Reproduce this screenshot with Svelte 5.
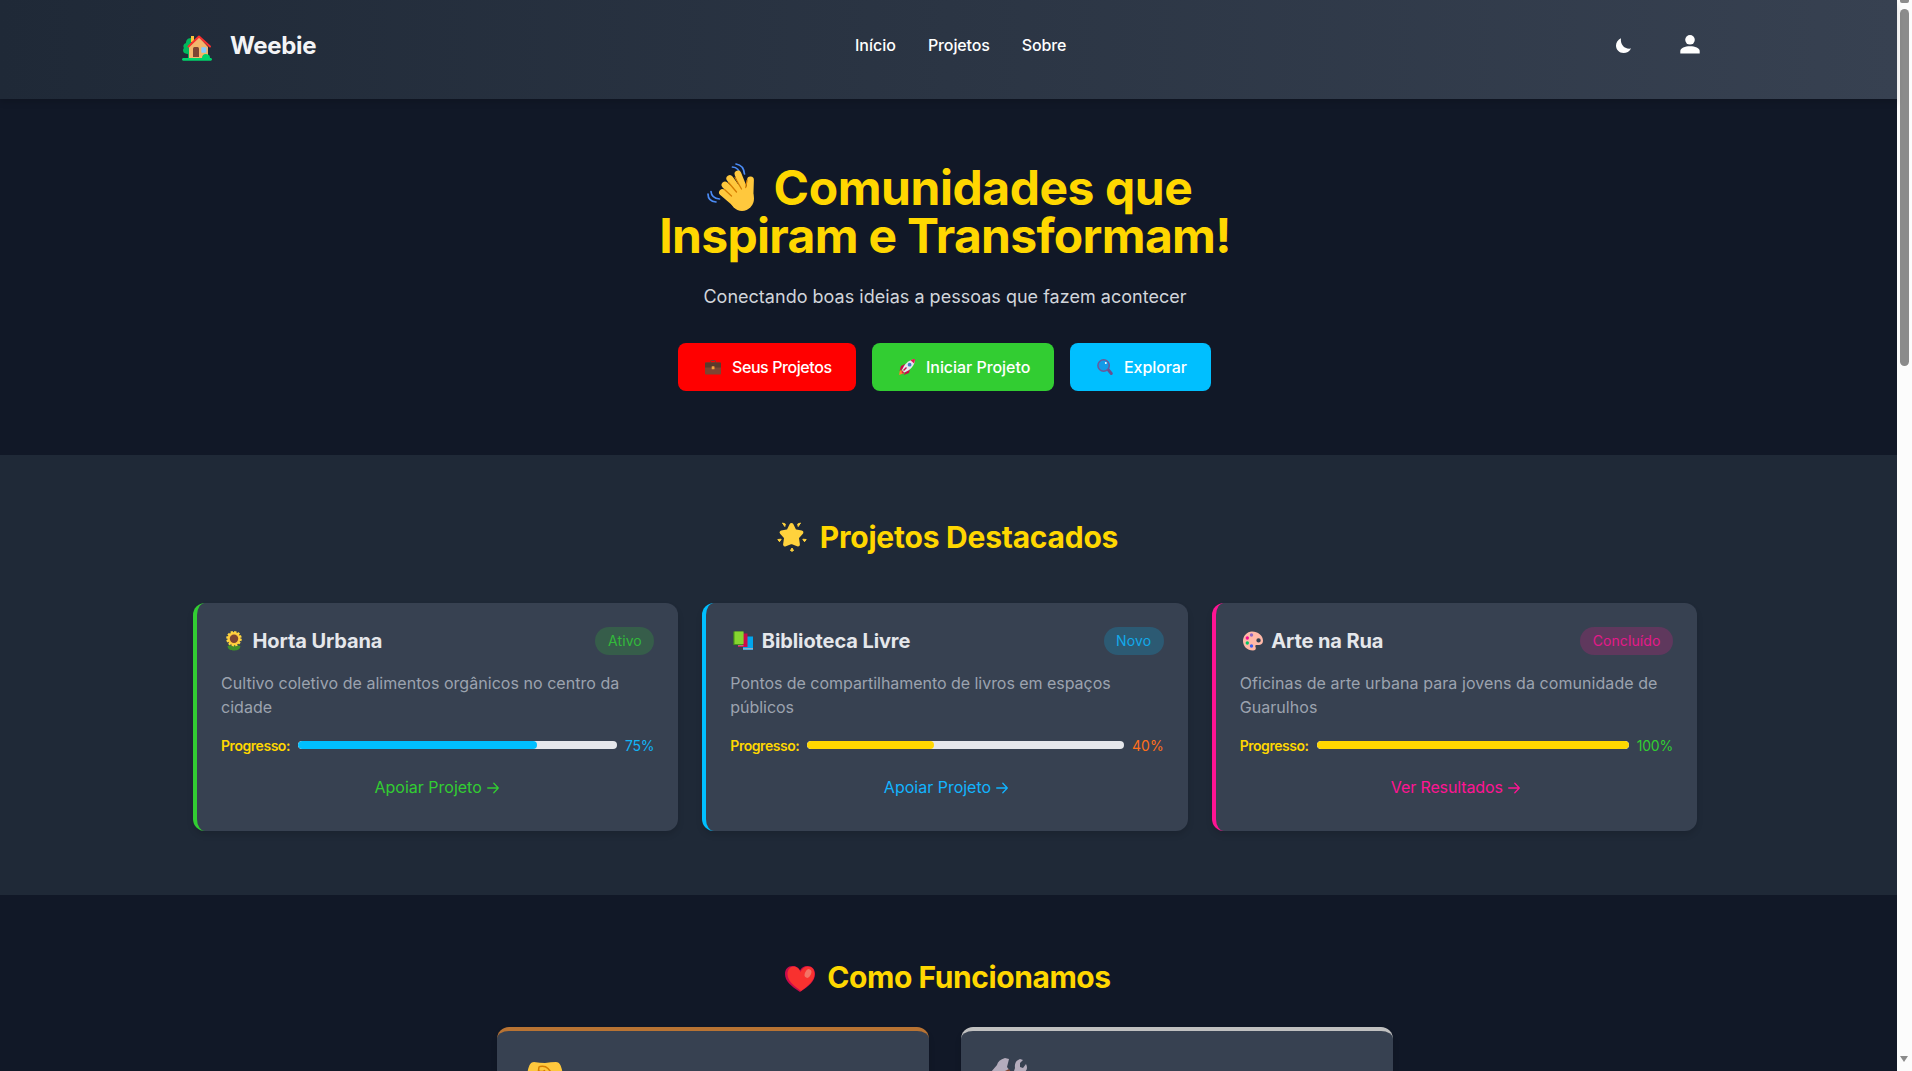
<script>
  const projects = [
    { icon: 'flower', tone: 'green', title: 'Horta Urbana', status: 'Ativo', lines: ['Cultivo coletivo de alimentos orgânicos no centro da', 'cidade'], progress: 75, bar: 'blue', pct: 'blue', action: 'Apoiar Projeto' },
    { icon: 'books', tone: 'blue', title: 'Biblioteca Livre', status: 'Novo', lines: ['Pontos de compartilhamento de livros em espaços', 'públicos'], progress: 40, bar: 'gold', pct: 'orange', action: 'Apoiar Projeto' },
    { icon: 'palette', tone: 'pink', title: 'Arte na Rua', status: 'Concluído', lines: ['Oficinas de arte urbana para jovens da comunidade de', 'Guarulhos'], progress: 100, bar: 'gold', pct: 'green', action: 'Ver Resultados' }
  ];
</script>

<div class="page">
  <div class="content">
    <header>
      <div class="brand">
        <svg class="house" viewBox="0 0 30 26">
          <path fill="#00b85c" d="M9 3C5 3 4 6 4 8 1 9 1 12 2 13c-2 2-1 6 4 6v4h4z" />
          <path fill="#f9c23c" d="M9 1h3v6H9z" />
          <path fill="#f3b56b" d="M17 2 7 12v11h19V12z" />
          <path fill="none" stroke="#f8312f" stroke-width="2" stroke-linecap="round" stroke-linejoin="round" d="M6.500 11.500 17 1.500 28 11.500" />
          <path fill="#7d4533" d="M11 22v-8.500q0-1.500 1.500-1.500h3q1.500 0 1.500 1.500V22z" />
          <rect fill="#83cbff" x="19.300" y="12.200" width="5" height="5.500" rx=".6" />
          <path fill="#00d26a" d="M0 24.500C0 23 1 23 2 23h18c0-3 2.500-4.500 4.800-3.800C27.500 19.500 28 21 28 23c1.200 0 2 .3 2 1.500 0 1-1 1.300-2 1.300H2c-1 0-2-.3-2-1.300" />
        </svg>
        <span class="t name">Weebie</span>
      </div>
      <nav>
        <span class="t">Início</span>
        <span class="t tight">Projetos</span>
        <span class="t tight">Sobre</span>
      </nav>
      <div class="tools">
        <svg class="moon" viewBox="0 0 15 15"><path fill="#fff" d="M5 .2C4 6.500 8.500 11.500 15 10.500 13.500 13.500 10.700 15 7.500 15 3.300 15 0 11.700 0 7.500 0 4.300 2 1.500 5 .2" /></svg>
        <svg class="user" viewBox="0 0 20 19"><circle fill="#fff" cx="10" cy="4.800" r="4.800" /><path fill="#fff" d="M.3 18.600v-2.500C.3 13 5 11.300 10 11.300s9.700 1.700 9.700 4.800v2.500z" /></svg>
      </div>
    </header>

    <section class="hero">
      <h1>
        <span class="line">
          <svg class="wave" viewBox="0 0 48 49">
            <path fill="none" stroke="#4b8bf5" stroke-width="1.700" stroke-linecap="round" d="M25.500 4c4.500.3 7 3.500 7.800 8M29 1c5 .8 8 4.500 8.500 10M4 28.500c.3 4 3 7 8.500 7.500M1 31c0 4.500 3 7.500 8 8" />
            <g stroke="#ffc83d" stroke-width="6.800" stroke-linecap="round">
              <path d="m15.500 29.500 14 12M18 22l15 15M22.800 15.500 36 34M31 11l8 20" />
              <path d="m43.500 17-.5 15" />
            </g>
            <ellipse fill="#ffc83d" cx="35" cy="35.500" rx="12" ry="12.500" />
            <path fill="none" stroke="#d67d00" stroke-width="1.300" stroke-linecap="round" d="m17.500 26.500 7 6.500M21.500 19.500l8 9.500M28 14.500l6.500 11.500M40 17.500l-1.300 7" />
          </svg>
          <span class="t h1a">Comunidades que</span>
        </span>
        <span class="line"><span class="t h1b">Inspiram e Transformam!</span></span>
      </h1>
      <p class="sub"><span class="t">Conectando boas ideias a pessoas que fazem acontecer</span></p>
      <div class="buttons">
        <div class="btn red">
          <svg class="bi" viewBox="0 0 16 16"><path fill="none" stroke="#6d4534" d="M5.500 4V2.500q0-1 1-1h3q1 0 1 1V4" /><rect fill="#7d4533" y="3.500" width="16" height="12" rx="1" /><path fill="#5b3a2c" d="M0 4.500q0-1 1-1h14q1 0 1 1v4H0z" /><rect fill="#f3a23c" x="6.700" y="7.300" width="2.800" height="3" rx=".5" /></svg>
          <span class="t">Seus Projetos</span>
        </div>
        <div class="btn green">
          <svg class="bi" viewBox="0 0 16 16"><path fill="#ff822d" d="m0 16 1-5 3 1 .5 2.500z" /><path fill="#ca0b4a" d="m6 5-4 2-1.500 5L5 9zM11 10l-1 4-5.500 2 3-4.500z" /><path fill="#e6e6f0" d="M3 11C5 6 9 1 16 0c0 6-4 11-11 13.500z" /><path fill="#e21b50" d="M11.500 1.200Q13.500 0 16 0q0 2.500-1 4.500zM2.500 11l3 3-2.500.5z" /><circle fill="#3f83c7" cx="10.600" cy="5.700" r="1.900" /><path stroke="#ca0b4a" stroke-width="1.500" d="m4.500 11.500 3-3" /></svg>
          <span class="t">Iniciar Projeto</span>
        </div>
        <div class="btn blue">
          <svg class="bi" viewBox="0 0 16 16"><path stroke="#695090" stroke-width="3" stroke-linecap="round" d="m11 10.500 3.300 4" /><circle fill="#129be8" stroke="#695a9c" stroke-width="1.500" cx="6.600" cy="6.500" r="5.700" /><circle fill="#fff" cx="8.800" cy="4" r="1" /></svg>
          <span class="t">Explorar</span>
        </div>
      </div>
    </section>

    <section class="featured">
      <h2 class="f">
        <svg class="star" viewBox="0 0 30 30"><g fill="#ffd23d" stroke="#ffd23d" stroke-linejoin="round"><path stroke-width="4" d="m14.500 3 3.200 6.300 6.700 1.200-4.500 5 1 7-6.400-2.700-6.400 2.700 1-7-4.500-5 6.700-1.200z" /><path d="m5.500 1 2.800 1-.5 2.500zM23.500 1l-2.800 1 .5 2.500zM.8 17.500l3.400-.3-1.700 2.500zM29.200 17.500l-3.400-.3 1.700 2.500zM15 26l1.500 2.500-1.500.8-1.500-.8z" /></g></svg>
        <span class="t">Projetos Destacados</span>
      </h2>
      <div class="cards">
        {#each projects as p}
          <article class="card {p.tone}">
            <div class="top">
              <h3>
                {#if p.icon === 'flower'}
                  <svg class="ci" viewBox="0 0 20 20"><path fill="#3f8f29" d="M9 12h2v4c2-2 4-1.500 5.500-1-.5 4-4 4.500-6.500 4.500S4 19 3.500 15C5 14.500 7 14 9 16z" /><circle cx="10" cy="7.700" r="6.600" fill="#ffc83d" /><circle cx="10" cy="7.700" r="6.600" fill="none" stroke="#ffd640" stroke-width="2.400" stroke-dasharray="2.200 1.250" /><circle cx="10" cy="7.700" r="4.200" fill="#7d4533" /></svg>
                {:else if p.icon === 'books'}
                  <svg class="ci" viewBox="0 0 20 20"><path fill="#00a6ed" d="M13 5.500h7V19H10v-4z" /><path fill="#b4acbc" d="M10 17.200h10v1.200H10z" /><path fill="#ca0b4a" d="M9 2.500h5.500V16H5v-3z" /><path fill="#b07f9c" d="M5 14.200h5.500v1H5z" /><path fill="#44911b" d="M.3.500H10V14H.3z" /><path fill="#86d72f" d="M1.500.500H10.600V13H1.500z" /></svg>
                {:else}
                  <svg class="ci" viewBox="0 0 20 20"><path fill="#ffb8a8" fill-rule="evenodd" d="M9 .5c6 0 11 4 11 9 0 4-3 5-6 4.500-2-.3-2 1-1.300 2.500.6 2-.7 3-2.700 3C4 19.500 0 15 0 10S4 .5 9 .5m6.500 6.700a2.200 2.200 0 1 0 .1 4.400 2.200 2.200 0 0 0-.1-4.400" /><circle cx="8.500" cy="4" r="1.700" fill="#8d65c5" /><circle cx="4.300" cy="7" r="1.700" fill="#f70a8d" /><circle cx="4.300" cy="12" r="1.700" fill="#00c462" /><circle cx="8.500" cy="15" r="1.700" fill="#3a5cf0" /></svg>
                {/if}
                <span class="t">{p.title}</span>
              </h3>
              <span class="badge"><span class="t">{p.status}</span></span>
            </div>
            <p class="desc">{#each p.lines as line}<span class="t">{line}</span>{/each}</p>
            <div class="progress">
              <span class="t plabel">Progresso:</span>
              <div class="track"><div class="fill {p.bar}" style:width="{p.progress}%"></div></div>
              <span class="t pct {p.pct}">{p.progress}%</span>
            </div>
            <div class="action"><span class="t">{p.action}</span><svg viewBox="0 0 12 12"><path fill="none" stroke="currentColor" stroke-width="1.300" stroke-linecap="round" stroke-linejoin="round" d="M.7 6h10.600M6.800 1.300 11.300 6l-4.500 4.700" /></svg></div>
          </article>
        {/each}
      </div>
    </section>

    <section class="how">
      <h2 class="c">
        <svg class="heart" viewBox="0 0 30 26"><path fill="#ca0b4a" d="M15 26C6 20 0 15 0 8 0 3 3 0 7.500 0 11 0 14 2 15 4.500 16 2 19 0 22.500 0 27 0 30 3 30 8c0 7-6 12-15 18" /><path fill="#f8312f" d="M16 25C8 19 2.500 14.500 2.500 8c0-4 2.500-7.500 6-7.500C12 .5 14.500 3 15.500 6 17 2.500 19.500.5 23 .5c4 0 6.500 3 6.500 7.500 0 6.500-6 11.500-13.500 17" /><ellipse fill="#f37366" cx="23" cy="7.500" rx="3" ry="4.500" transform="rotate(25 23 7.500)" /></svg>
        <span class="t">Como Funcionamos</span>
      </h2>
      <div class="steps">
        <article class="step bronze"><svg class="hands" viewBox="0 0 36 36"><path fill="#ffc83d" d="M0 14C1 5 3 0 7 0q6 1 11 1Q24 0 29 0c4 0 6 5 7 14v15H0z" /><path fill="none" stroke="#d67d00" stroke-width="1.500" stroke-linecap="round" d="M13 4.500q5-1 8 2l5 6M12 5l-.5 3.500q3 2 6 0" /></svg></article>
        <article class="step silver"><svg class="toolsi" viewBox="0 0 36 36"><path fill="#b4acbc" d="M0 14 6 7q1-5 8-7l4 1-2 8 3 4-8 8-4-7-4 3z" /><path fill="#b4acbc" d="m21 19 3-9q-1-7 5-9l3 1-3 3v4l3 1 3-4q3 6-3 9l-3 1-6 12z" /><path fill="#7d4533" d="m14 13 4-2 10 16h-8z" /></svg></article>
      </div>
    </section>
  </div>
  <div class="scrollbar"><i class="up"></i><i class="thumb"></i><i class="down"></i></div>
</div>

<style>
  :global(body) { overflow: hidden; background: #111827; }
  .page { display: flex; height: 1071px; overflow: hidden; font-family: Inter, "Liberation Sans", sans-serif; color: #e5e7eb; }
  .content { width: 1897px; flex: none; }
  svg { display: block; flex: none; overflow: visible; }
  h1, h2, h3, p { margin: 0; }
  .t { white-space: nowrap; }
  header { box-sizing: border-box; height: 99px; padding: 18px 197px 27px 182px; display: grid; grid-template-columns: 673px 1fr auto; align-items: center; background: linear-gradient(90deg, #1f2937, #374151); position: relative; box-shadow: 0 4px 6px rgba(0,0,0,.12); }
  .brand { display: flex; gap: 18px; align-items: center; font-size: 24px; font-weight: 700; color: #f3f4f6; }
  .house { width: 30px; height: 26px; margin-top: 5px; }
  .name { letter-spacing: -.35px; }
  nav { display: flex; gap: 32px; font-weight: 500; font-size: 16px; color: #fff; }
  .tight { letter-spacing: -.13px; }
  .tools { display: flex; align-items: center; gap: 49px; }
  .moon { width: 15px; height: 15px; }
  .user { width: 20px; height: 19px; margin-top: -1px; }
  section { box-sizing: border-box; padding: 64px 7px 0 0; display: flex; flex-direction: column; align-items: center; }
  .hero { height: 356px; background: #111827; }
  h1 { font-size: 48px; line-height: 49px; font-weight: 700; color: #ffd700; }
  .line { display: flex; justify-content: center; height: 48px; }
  .wave { width: 48px; height: 49px; margin: 0 18.500px 0 9.500px; }
  .h1a { letter-spacing: -.45px; }
  .h1b { letter-spacing: -.69px; }
  .sub { font-size: 18px; line-height: 28px; margin-top: 24px; color: #d1d5db; letter-spacing: .02px; }
  .buttons { display: flex; gap: 16px; margin: 32px 1px 0 0; }
  .btn { box-sizing: border-box; height: 48px; border-radius: 8px; padding: 0 24px 0 27px; display: flex; align-items: center; gap: 11px; font-size: 16px; font-weight: 500; color: #fff; letter-spacing: -.08px; }
  .btn.red { background: #f00; width: 178px; letter-spacing: -.42px; }
  .btn.green { background: #32cd32; width: 182px; letter-spacing: -.05px; }
  .btn.blue { background: #00bfff; width: 141px; }
  .bi { width: 16px; height: 16px; }
  .featured { height: 440px; background: #1f2937; }
  h2 { display: flex; align-items: center; height: 36px; font-size: 30px; line-height: 36px; font-weight: 700; color: #ffd700; }
  .f { gap: 13px; letter-spacing: -.23px; }
  .c { gap: 12px; letter-spacing: -.43px; }
  .star { width: 30px; height: 30px; margin-left: 5px; }
  .heart { width: 30px; height: 26px; margin: 3px 0 0 6px; }
  .cards { width: 1504px; display: grid; grid-template-columns: repeat(3, 1fr); gap: 24px; margin-top: 48px; }
  .card { box-sizing: border-box; min-width: 0; height: 228px; border-left: 4px solid; border-radius: 12px; padding: 24px; background: #374151; box-shadow: 0 4px 6px rgba(0,0,0,.12); }
  .card.green { border-color: #32cd32; }
  .card.blue { border-color: #00bfff; }
  .card.pink { border-color: #ff1493; }
  .top { height: 28px; display: flex; justify-content: space-between; align-items: center; }
  h3 { font-size: 20px; font-weight: 700; letter-spacing: -.1px; display: flex; align-items: center; gap: 8.500px; padding-left: 3px; }
  .ci { width: 20px; height: 20px; }
  .badge { height: 28px; padding: 0 12.500px; border-radius: 14px; font-size: 14px; line-height: 28px; letter-spacing: .1px; }
  .green .badge { background: rgba(50,205,50,.2); color: #32b93a; }
  .blue .badge { background: rgba(0,191,255,.2); color: #12a9ea; }
  .pink .badge { background: rgba(255,20,147,.2); color: #e5188a; }
  .desc { margin-top: 16px; font-size: 16px; line-height: 24px; color: #9ca3af; }
  .desc span { display: block; }
  .green .desc { letter-spacing: .04px; }
  .blue .desc { letter-spacing: -.04px; }
  .pink .desc { letter-spacing: .07px; }
  .progress { display: flex; align-items: center; height: 20px; margin-top: 16px; gap: 8px; font-size: 14px; }
  .plabel { color: #ffd700; font-weight: 600; letter-spacing: -.45px; }
  .track { flex: 1; height: 8px; border-radius: 4px; background: #e5e7eb; overflow: hidden; }
  .fill { height: 8px; border-radius: 4px; }
  .fill.blue { background: #00bfff; }
  .fill.gold { background: #ffd700; }
  .pct.blue { color: #12b4f5; letter-spacing: -.2px; }
  .pct.orange { color: #ff6f1a; }
  .pct.green { color: #32cd32; letter-spacing: -.2px; }
  .action { display: flex; align-items: center; justify-content: center; gap: 5px; margin: 20px 2px 0 0; height: 24px; font-size: 16px; }
  .action svg { width: 12px; height: 12px; margin-top: 2px; }
  .green .action { color: #32cd32; }
  .blue .action { color: #12b4ff; }
  .pink .action { color: #ff1493; letter-spacing: -.12px; }
  .how { height: 176px; background: #111827; }
  .steps { display: flex; gap: 32px; margin-top: 32px; }
  .step { box-sizing: border-box; width: 432px; height: 220px; border-top: 4px solid; border-radius: 12px; background: #374151; padding: 31px 30px; box-shadow: 0 4px 6px rgba(0,0,0,.12); }
  .bronze { border-color: #b87333; }
  .silver { border-color: #c0c0c0; padding-top: 27px; }
  .hands, .toolsi { width: 36px; height: 36px; }
  .scrollbar { width: 15px; height: 1071px; box-sizing: border-box; background: #fcfcfc; display: flex; flex-direction: column; padding-left: 3px; }
  .scrollbar i { display: block; width: 9px; background: #8b8b8b; }
  .up { height: 3px; border-radius: 0 0 2px 2px; }
  .thumb { height: 357px; margin-top: 6px; border-radius: 5px; }
  .scrollbar .down { width: 0; height: 0; background: none; border: 4.500px solid transparent; border-bottom: 0; border-top: 6px solid #8b8b8b; margin-top: 690px; }
</style>
